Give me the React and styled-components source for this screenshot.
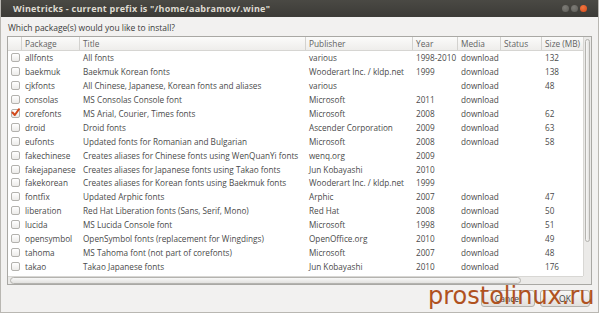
import React from 'react';
import styled, { createGlobalStyle } from 'styled-components';

const COLUMNS = '13px 58px 226px 107px 45px 43px 41px 42px';

const packages = [
  ['allfonts', 'All fonts', 'various', '1998-2010', 'download', '', '132'],
  ['baekmuk', 'Baekmuk Korean fonts', 'Wooderart Inc. / kldp.net', '1999', 'download', '', '138'],
  ['cjkfonts', 'All Chinese, Japanese, Korean fonts and aliases', 'various', '', 'download', '', '48'],
  ['consolas', 'MS Consolas Console font', 'Microsoft', '2011', 'download', '', ''],
  ['corefonts', 'MS Arial, Courier, Times fonts', 'Microsoft', '2008', 'download', '', '62', true],
  ['droid', 'Droid fonts', 'Ascender Corporation', '2009', 'download', '', '63'],
  ['eufonts', 'Updated fonts for Romanian and Bulgarian', 'Microsoft', '2008', 'download', '', '58'],
  ['fakechinese', 'Creates aliases for Chinese fonts using WenQuanYi fonts', 'wenq.org', '2009', '', '', ''],
  ['fakejapanese', 'Creates aliases for Japanese fonts using Takao fonts', 'Jun Kobayashi', '2010', '', '', ''],
  ['fakekorean', 'Creates aliases for Korean fonts using Baekmuk fonts', 'Wooderart Inc. / kldp.net', '1999', '', '', ''],
  ['fontfix', 'Updated Arphic fonts', 'Arphic', '2007', 'download', '', '47'],
  ['liberation', 'Red Hat Liberation fonts (Sans, Serif, Mono)', 'Red Hat', '2008', 'download', '', '50'],
  ['lucida', 'MS Lucida Console font', 'Microsoft', '1998', 'download', '', '51'],
  ['opensymbol', 'OpenSymbol fonts (replacement for Wingdings)', 'OpenOffice.org', '2010', 'download', '', '49'],
  ['tahoma', 'MS Tahoma font (not part of corefonts)', 'Microsoft', '2007', 'download', '', '48'],
  ['takao', 'Takao Japanese fonts', 'Jun Kobayashi', '2010', 'download', '', '176'],
  ['uff', 'Ubuntu Font Family', 'Ubuntu', '2010', 'download', '', '1'],
];

const headers = ['Package', 'Title', 'Publisher', 'Year', 'Media', 'Status', 'Size (MB)'];

const GlobalStyle = createGlobalStyle`
  body {
    margin: 0;
    background: #f2f1f0;
    font-family: "Open Sans", "Liberation Sans", sans-serif;
  }
`;

const Window = styled.div`
  position: relative;
  display: flex;
  flex-direction: column;
  width: 599px;
  height: 313px;
  box-sizing: border-box;
  background: #f2f1f0;
  border: 1px solid #b9b7b2;
  border-top: none;
  overflow: hidden;
`;

const TitleBar = styled.div`
  display: flex;
  align-items: center;
  height: 17px;
  flex-shrink: 0;
  padding-left: 12px;
  background: linear-gradient(#4a4944, #3c3b37);
`;

const TitleText = styled.span`
  color: #dfdbd2;
  font-size: 9px;
  font-weight: bold;
  letter-spacing: 0.22px;
`;

const Controls = styled.div`
  display: flex;
  gap: 2px;
  margin-left: auto;
  padding-right: 11px;
`;

const Control = styled.span`
  width: 7px;
  height: 7px;
  border-radius: 50%;
  background: ${p => (p.$close ? 'radial-gradient(circle at 40% 35%, #f0773f, #d9481b)' : 'radial-gradient(circle at 40% 35%, #7d7c77, #5d5c57)')};
`;

const Content = styled.div`
  display: flex;
  flex-direction: column;
  flex: 1;
  padding: 0 6px;
`;

const Prompt = styled.div`
  height: 19px;
  display: flex;
  align-items: center;
  padding: 2px 0 0 1px;
  box-sizing: border-box;
  font-size: 8.5px;
  color: #3c3c3c;
`;

const Frame = styled.div`
  display: grid;
  grid-template-columns: 575px 8px;
  grid-template-rows: 239px 8px;
  border: 1px solid #a9a8a4;
  background: #fff;
`;

const Viewport = styled.div`
  overflow: hidden;
`;

const HeaderRow = styled.div`
  display: grid;
  grid-template-columns: ${COLUMNS};
  height: 13px;
  border-bottom: 1px solid #d6d5d2;
  background: linear-gradient(#fbfbfa, #eeedeb);
`;

const HeaderCell = styled.div`
  display: flex;
  align-items: center;
  padding-left: 3px;
  font-size: 8.3px;
  color: #626262;
  border-left: ${p => (p.$first ? 'none' : '1px solid #d3d2cf')};
  white-space: nowrap;
  overflow: hidden;
`;

const Row = styled.div`
  display: grid;
  grid-template-columns: ${COLUMNS};
  height: 13.9px;
`;

const Cell = styled.div`
  display: flex;
  align-items: center;
  padding-left: 4px;
  font-size: 8.2px;
  color: #4a4a4a;
  white-space: nowrap;
  overflow: hidden;
`;

const CheckCell = styled.div`
  display: flex;
  align-items: center;
  justify-content: center;
  padding-left: 1px;
`;

const Box = styled.span`
  position: relative;
  width: 7px;
  height: 7px;
  border: 1px solid #b3b2ae;
  border-radius: 2px;
  background: linear-gradient(#ffffff, #ecebe9);
`;

const VScroll = styled.div`
  border-left: 1px solid #d8d7d4;
  background: #ebeae8;
  padding: 2px 1px 34px 1px;
  display: flex;
`;

const VThumb = styled.div`
  flex: 1;
  border: 1px solid #b4b3af;
  border-radius: 4px;
  background: linear-gradient(90deg, #f8f8f7, #e2e1df);
`;

const HScroll = styled.div`
  border-top: 1px solid #d8d7d4;
  background: #ebeae8;
  padding: 0 62px 0 2px;
  display: flex;
`;

const HThumb = styled.div`
  flex: 1;
  border: 1px solid #b4b3af;
  border-radius: 4px;
  background: linear-gradient(#f8f8f7, #e2e1df);
`;

const Corner = styled.div`
  background: #ebeae8;
`;

const ButtonBar = styled.div`
  display: flex;
  justify-content: flex-end;
  align-items: center;
  gap: 5px;
  flex: 1;
  padding-right: 2px;
`;

const Button = styled.button`
  height: 17px;
  width: ${p => p.$w}px;
  padding: 0;
  font-family: inherit;
  font-size: 8.5px;
  color: #3c3c3c;
  border: 1px solid #b3b1ac;
  border-radius: 3px;
  background: linear-gradient(#f8f7f6, #e1dfdc);
`;

const Watermark = styled.div`
  position: absolute;
  left: 427px;
  top: 284px;
  font-family: "DejaVu Sans", sans-serif;
  font-size: 24px;
  line-height: 1;
  color: #b0521f;
  pointer-events: none;
`;

const Check = () => (
  <svg width="9" height="9" viewBox="0 0 9 9" style={{ position: 'absolute', left: -1, top: -2 }}>
    <path d="M1.5 4.5 L3.8 7 L8 1.2" fill="none" stroke="#d24a1c" strokeWidth="2" strokeLinecap="round" strokeLinejoin="round" />
  </svg>
);

const App = () => (
  <>
    <GlobalStyle />
    <Window>
      <TitleBar>
        <TitleText>Winetricks - current prefix is "/home/aabramov/.wine"</TitleText>
        <Controls>
          <Control />
          <Control />
          <Control $close />
        </Controls>
      </TitleBar>
      <Content>
        <Prompt>Which package(s) would you like to install?</Prompt>
        <Frame>
          <Viewport>
            <HeaderRow>
              <HeaderCell $first />
              {headers.map(h => (
                <HeaderCell key={h}>{h}</HeaderCell>
              ))}
            </HeaderRow>
            {packages.map(([name, title, publisher, year, media, status, size, checked]) => (
              <Row key={name}>
                <CheckCell>
                  <Box>{checked && <Check />}</Box>
                </CheckCell>
                <Cell>{name}</Cell>
                <Cell>{title}</Cell>
                <Cell>{publisher}</Cell>
                <Cell>{year}</Cell>
                <Cell>{media}</Cell>
                <Cell>{status}</Cell>
                <Cell>{size}</Cell>
              </Row>
            ))}
          </Viewport>
          <VScroll>
            <VThumb />
          </VScroll>
          <HScroll>
            <HThumb />
          </HScroll>
          <Corner />
        </Frame>
        <ButtonBar>
          <Button $w={54}>Cancel</Button>
          <Button $w={50}>OK</Button>
        </ButtonBar>
      </Content>
      <Watermark>prostolinux.ru</Watermark>
    </Window>
  </>
);

export default App;
